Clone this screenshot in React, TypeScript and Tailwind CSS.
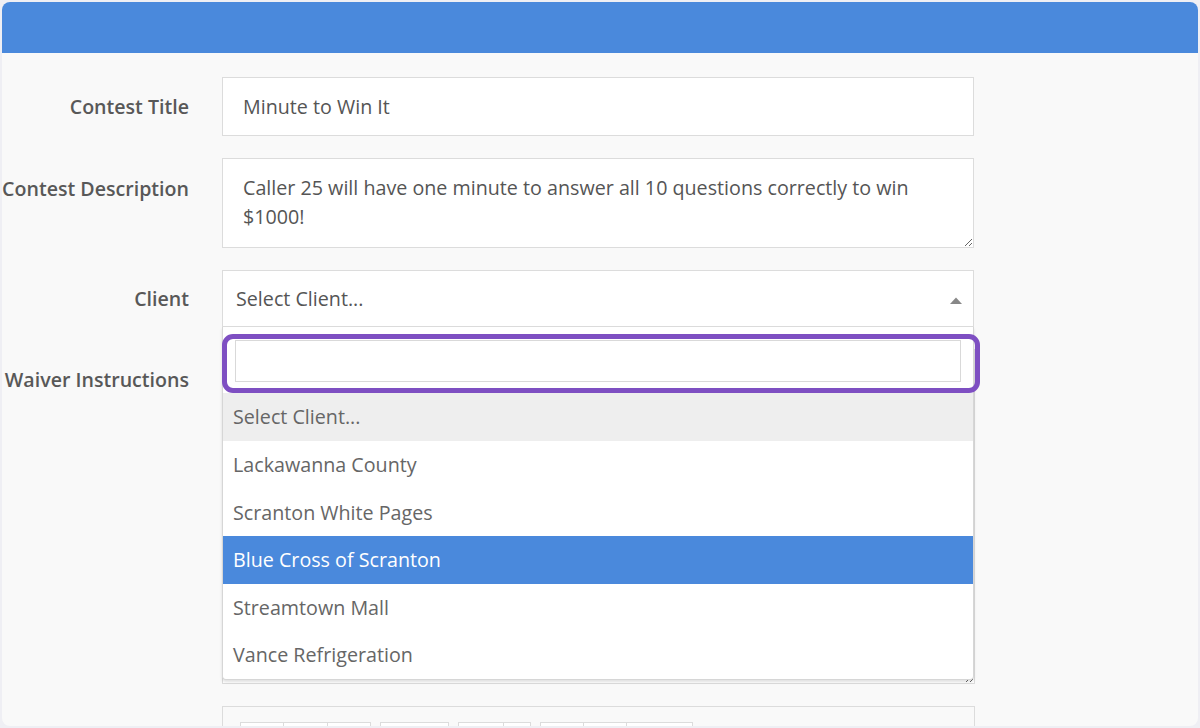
import React from "react";

const font = { fontFamily: '"Open Sans", "Liberation Sans", sans-serif' };

function Label({ children, top }: { children: React.ReactNode; top: string }) {
  return (
    <div className={`w-[187px] shrink-0 text-right text-[19.6px] font-semibold text-[#585858] whitespace-nowrap ${top}`}>
      {children}
    </div>
  );
}

export default function App() {
  const options = [
    "Lackawanna County",
    "Scranton White Pages",
    "Blue Cross of Scranton",
    "Streamtown Mall",
    "Vance Refrigeration",
  ];
  return (
    <div className="h-[728px] w-[1200px] overflow-hidden bg-[#efeff4] p-[2px]" style={font}>
      <div className="flex h-[724px] flex-col overflow-hidden rounded-[8px] bg-[#f9f9f9]">
        <div className="h-[51px] shrink-0 bg-[#4a89dc]" />
        <div className="flex flex-col gap-[22px] pt-[24px]">
          {/* Contest Title */}
          <div className="flex items-center gap-[33px]">
            <Label top="">Contest Title</Label>
            <div className="flex h-[59px] w-[752px] items-center border border-[#dcdcdc] bg-white px-[20px] text-[19.7px] text-[#555]">
              Minute to Win It
            </div>
          </div>
          {/* Contest Description */}
          <div className="flex items-start gap-[33px]">
            <Label top="pt-[16px]">Contest Description</Label>
            <textarea
              readOnly
              defaultValue="Caller 25 will have one minute to answer all 10 questions correctly to win $1000!"
              className="block h-[90px] w-[752px] resize-y border border-[#dcdcdc] bg-white px-[20px] pt-[14px] text-[19.7px] leading-[29px] text-[#555] outline-none"
              style={font}
            />
          </div>
          {/* Client */}
          <div className="flex items-center gap-[33px]">
            <Label top="">Client</Label>
            <div className="relative w-[752px]">
              <div className="flex h-[57px] items-center justify-between border border-[#dcdcdc] bg-white pl-[13px] pr-[11px] text-[19.7px] text-[#555]">
                <span>Select Client...</span>
                <svg width="12" height="7" viewBox="0 0 12 7" className="mt-[3px]">
                  <polygon points="0,7 6,0.5 12,7" fill="#888" />
                </svg>
              </div>
              {/* Dropdown */}
              <div className="absolute left-0 top-[57px] z-10 h-[353px] w-[752px] rounded-b-[4px] border border-t-0 border-[#d6d6d6] bg-white shadow-[0_2px_3px_rgba(0,0,0,0.12)]">
                <div className="px-[12px] pb-[11px] pt-[13px]">
                  <div className="h-[42px] w-full border border-[#d9d9d9] bg-white" />
                </div>
                <div className="flex h-[48px] items-center bg-[#eeeeee] pl-[10px] text-[19.7px] text-[#666]">
                  Select Client...
                </div>
                {options.map((o, i) =>
                  o === "Blue Cross of Scranton" ? (
                    <div key={i} className="flex h-[47.6px] items-center bg-[#4a89dc] pl-[10px] text-[19.7px] text-white">
                      {o}
                    </div>
                  ) : (
                    <div key={i} className="flex h-[47.6px] items-center pl-[10px] text-[19.7px] text-[#666]">
                      {o}
                    </div>
                  )
                )}
                {/* highlight annotation */}
                <div className="pointer-events-none absolute left-[-1px] top-[7px] h-[59px] w-[758px] rounded-[11px] border-[5px] border-[#7e4fc2]" />
              </div>
            </div>
          </div>
          {/* Waiver Instructions */}
          <div className="flex items-start gap-[33px]">
            <Label top="pt-[16px]">Waiver Instructions</Label>
            <textarea
              readOnly
              className="block h-[335px] w-[753px] resize-y border border-[#dcdcdc] bg-white outline-none"
            />
          </div>
          {/* Editor */}
          <div className="flex items-start gap-[33px]">
            <div className="w-[187px] shrink-0" />
            <div className="h-[60px] w-[753px] border border-[#dcdcdc] bg-[#f9f9f9] px-[17px] pt-[15px]">
              <div className="flex gap-[9px]">
                <div className="flex h-[30px] border border-[#dcdcdc] bg-white">
                  <div className="w-[43px] border-r border-[#dcdcdc]" />
                  <div className="w-[44px] border-r border-[#dcdcdc]" />
                  <div className="w-[42px]" />
                </div>
                <div className="flex h-[30px] border border-[#dcdcdc] bg-white">
                  <div className="w-[67px]" />
                </div>
                <div className="flex h-[30px] border border-[#dcdcdc] bg-white">
                  <div className="w-[45px] border-r border-[#dcdcdc]" />
                  <div className="w-[26px]" />
                </div>
                <div className="flex h-[30px] border border-[#dcdcdc] bg-white">
                  <div className="w-[43px] border-r border-[#dcdcdc]" />
                  <div className="w-[43px] border-r border-[#dcdcdc]" />
                  <div className="w-[65px]" />
                </div>
              </div>
            </div>
          </div>
        </div>
      </div>
    </div>
  );
}
